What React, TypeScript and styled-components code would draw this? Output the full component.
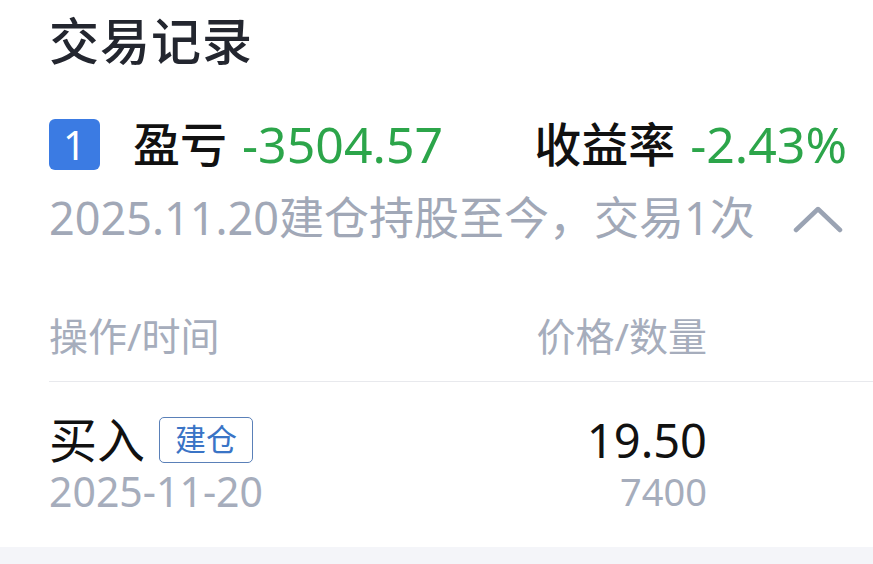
import React from "react";
import styled, { createGlobalStyle } from "styled-components";

const Global = createGlobalStyle`
  html, body { margin: 0; padding: 0; background: #ffffff; }
  body { font-family: "Noto Sans", "Noto Sans CJK SC", sans-serif; }
`;

const Page = styled.div`
  width: 873px;
  height: 564px;
  display: flex;
  flex-direction: column;
  background: #ffffff;
  overflow: hidden;
`;

const Card = styled.div`
  padding-left: 49px;
  display: flex;
  flex-direction: column;
`;

const Title = styled.h1`
  margin: 0;
  font-size: 50px;
  line-height: 82px;
  font-weight: 500;
  color: #23262f;
  letter-spacing: 1px;
`;

const Summary = styled.div`
  margin-top: 37px;
  padding-right: 26px;
  height: 51px;
  display: flex;
  align-items: center;
  justify-content: space-between;
`;

const Group = styled.div`
  display: flex;
  align-items: center;
`;

const Badge = styled.div`
  width: 51px;
  height: 51px;
  border-radius: 6px;
  background: #3b7be3;
  color: #ffffff;
  font-size: 40px;
  line-height: 51px;
  text-align: center;
  margin-right: 33px;
`;

const Label = styled.span`
  font-size: 47px;
  font-weight: 500;
  color: #111111;
  line-height: 51px;
`;

const Value = styled.span<{ $tone: "down" | "up" }>`
  font-size: 50px;
  color: ${(p) => (p.$tone === "down" ? "#2ca54a" : "#e5393a")};
  margin-left: 15px;
  line-height: 51px;
`;

const SubRow = styled.div`
  margin-top: 23px;
  padding-right: 30px;
  display: flex;
  align-items: center;
  justify-content: space-between;
  height: 50px;
`;

const SubText = styled.span`
  font-size: 45px;
  color: #a1a8b7;
  line-height: 50px;
`;

const Chevron = styled.svg`
  width: 50px;
  height: 28px;
  display: block;
  margin-top: 4px;
`;

const TableHead = styled.div`
  margin-top: 68px;
  display: grid;
  grid-template-columns: 1fr auto;
  padding-right: 166px;
  padding-bottom: 20px;
  border-bottom: 1.5px solid #e8e9ed;
`;

const HeadCell = styled.span<{ $align?: "left" | "right" }>`
  font-size: 39px;
  line-height: 50px;
  color: #a6adbc;
  text-align: ${(p) => p.$align ?? "left"};
`;

const ItemRow = styled.div`
  padding-top: 33px;
  padding-bottom: 33px;
  padding-right: 166px;
  display: grid;
  grid-template-columns: 1fr auto;
`;

const Cell = styled.div<{ $align?: "left" | "right" }>`
  display: flex;
  flex-direction: column;
  align-items: ${(p) => (p.$align === "right" ? "flex-end" : "flex-start")};
`;

const Line = styled.div`
  display: flex;
  align-items: center;
  height: 50px;
`;

const Action = styled.span`
  font-size: 48px;
  color: #111111;
  line-height: 50px;
`;

const Tag = styled.span`
  margin-left: 14px;
  box-sizing: border-box;
  height: 46px;
  padding: 0 15px;
  border: 1.5px solid #5a80b8;
  border-radius: 5px;
  color: #3a74c6;
  font-size: 31px;
  line-height: 42px;
`;

const Primary = styled.span`
  font-size: 47px;
  color: #111111;
  line-height: 50px;
`;

const Secondary = styled.span<{ $size?: number }>`
  margin-top: 3px;
  font-size: ${(p) => p.$size ?? 41}px;
  color: #a6adbc;
  line-height: 46px;
`;

const Footer = styled.div`
  flex: 1;
  background: #f4f5f9;
`;

export default function App() {
  return (
    <Page>
      <Global />
      <Card>
        <Title>交易记录</Title>
        <Summary>
          <Group>
            <Badge>1</Badge>
            <Label>盈亏</Label>
            <Value $tone="down">-3504.57</Value>
          </Group>
          <Group>
            <Label>收益率</Label>
            <Value $tone="down">-2.43%</Value>
          </Group>
        </Summary>
        <SubRow>
          <SubText>2025.11.20建仓持股至今，交易1次</SubText>
          <Chevron viewBox="0 0 50 28">
            <polyline
              points="3,24 25,3 47,24"
              fill="none"
              stroke="#9aa3b3"
              strokeWidth="4.5"
              strokeLinecap="round"
              strokeLinejoin="round"
            />
          </Chevron>
        </SubRow>
        <TableHead>
          <HeadCell>操作/时间</HeadCell>
          <HeadCell $align="right">价格/数量</HeadCell>
        </TableHead>
        <ItemRow>
          <Cell>
            <Line>
              <Action>买入</Action>
              <Tag>建仓</Tag>
            </Line>
            <Secondary>2025-11-20</Secondary>
          </Cell>
          <Cell $align="right">
            <Line>
              <Primary>19.50</Primary>
            </Line>
            <Secondary $size={38}>7400</Secondary>
          </Cell>
        </ItemRow>
      </Card>
      <Footer />
    </Page>
  );
}
